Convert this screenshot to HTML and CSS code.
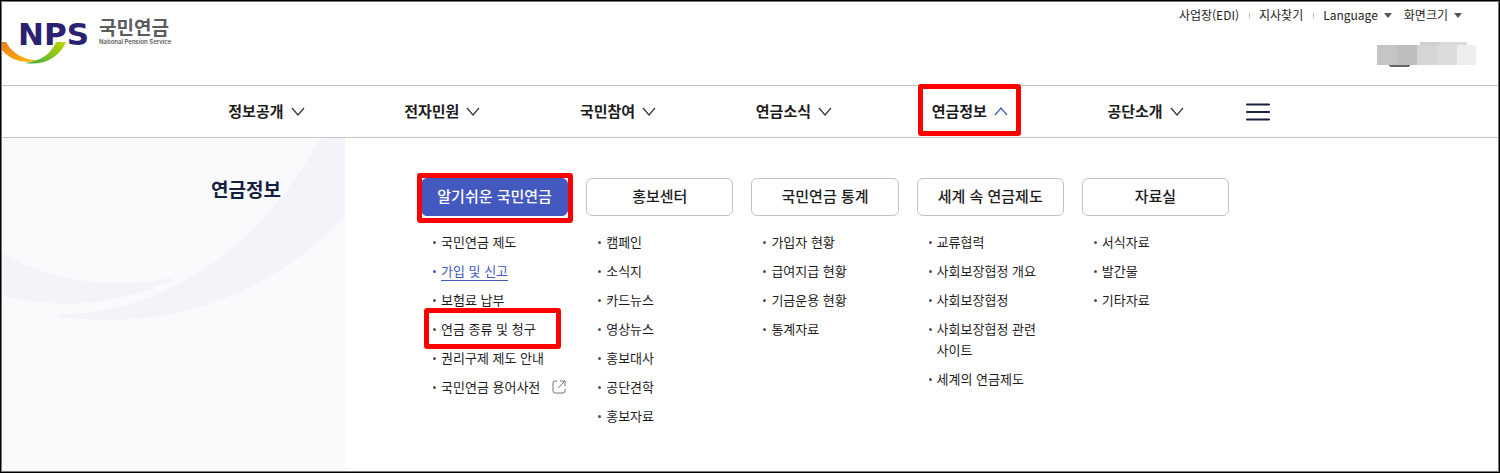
FILE: index.html
```html
<!DOCTYPE html>
<html lang="ko">
<head>
<meta charset="utf-8">
<title>국민연금</title>
<link rel="stylesheet" href="styles.css">
</head>
<body>
<div class="page">
  <header class="header">
    <a class="logo" href="#">
      <svg width="172" height="68" viewBox="2 2 172 68" role="img" aria-label="NPS 국민연금">
        <defs>
          <linearGradient id="orange" x1="0" y1="0" x2="1" y2="1">
            <stop offset="0" stop-color="#ee7d16"/><stop offset="1" stop-color="#fbb800"/>
          </linearGradient>
          <linearGradient id="green" x1="0" y1="1" x2="1" y2="0">
            <stop offset="0" stop-color="#3fae3a"/><stop offset="1" stop-color="#c3d500"/>
          </linearGradient>
        </defs>
        <path d="M2 42H6C12 53 23 60 38 60.500C23 64 10 60 2 50Z" fill="url(#orange)"/>
        <path d="M25 63C41 61 51 54 56 42H66C59 58 43 66 25 63Z" fill="url(#green)"/>
        <text class="logo-mark" x="18" y="45">NPS</text>
        <text class="logo-name" x="99" y="35">국민연금</text>
        <text class="logo-sub" x="99" y="44">National Pension Service</text>
      </svg>
    </a>
    <div class="header-side">
      <ul class="util">
        <li><a href="#">사업장(EDI)</a></li>
        <li><a href="#">지사찾기</a></li>
        <li><button type="button">Language <span class="caret"></span></button></li>
        <li><button type="button">화면크기 <span class="caret"></span></button></li>
      </ul>
      <svg class="mosaic" width="99" height="25" viewBox="0 0 99 25" shape-rendering="crispEdges" aria-hidden="true">
        <path d="M43 0H63V3H43Z" fill="#d0d0d0"/>
        <path d="M63 0H90V3H63Z" fill="#dbdddc"/>
        <path d="M0 3H20V23H0Z" fill="#c5c5c5"/>
        <path d="M20 3H40V23H20Z" fill="#bebebe"/>
        <path d="M40 3H60V23H40Z" fill="#d5d5d5"/>
        <path d="M60 3H80V23H60Z" fill="#dbdddc"/>
        <path d="M80 3H99V23H80Z" fill="#eeeeee"/>
        <path d="M11 23H33L31 25H13Z" fill="#666"/>
      </svg>
    </div>
  </header>

  <nav class="nav">
    <div class="nav-inner">
      <ul class="nav-list">
        <li><a href="#">정보공개<svg class="chev" viewBox="0 0 12 8"><path d="M0 0l6 7 6-7"/></svg></a></li>
        <li><a href="#">전자민원<svg class="chev" viewBox="0 0 12 8"><path d="M0 0l6 7 6-7"/></svg></a></li>
        <li><a href="#">국민참여<svg class="chev" viewBox="0 0 12 8"><path d="M0 0l6 7 6-7"/></svg></a></li>
        <li><a href="#">연금소식<svg class="chev" viewBox="0 0 12 8"><path d="M0 0l6 7 6-7"/></svg></a></li>
        <li><a class="marked marked-nav" href="#">연금정보<svg class="chev chev-open" viewBox="0 0 12 8"><path d="M0 7l6-7 6 7"/></svg></a></li>
        <li><a href="#">공단소개<svg class="chev" viewBox="0 0 12 8"><path d="M0 0l6 7 6-7"/></svg></a></li>
      </ul>
      <button class="menu" type="button" aria-label="전체메뉴">
        <svg width="24" height="18" viewBox="0 0 24 18"><path d="M1 1.500H23M1 9H23M1 16.500H23"/></svg>
      </button>
    </div>
  </nav>

  <main class="mega">
    <div class="mega-side">
      <svg class="swoosh" width="343" height="190" viewBox="2 138 343 190" aria-hidden="true">
        <path d="M2 253C55 283 110 289 170 278C174 278 173 280 170 281C115 306 60 309 2 296Z"/>
        <path d="M59 314C155 315 254 256 316 145Q320 138 328 138H345V216C270 296 168 331 60 317Q56 315 59 314Z"/>
      </svg>
      <h2 class="mega-title">연금정보</h2>
    </div>
    <div class="mega-cols">
      <section>
        <a class="tab tab-on marked marked-tab" href="#">알기쉬운 국민연금</a>
        <ul class="links">
          <li><a href="#">국민연금 제도</a></li>
          <li class="current"><a href="#">가입 및 신고</a></li>
          <li><a href="#">보험료 납부</a></li>
          <li class="marked marked-link"><a href="#">연금 종류 및 청구</a></li>
          <li><a href="#">권리구제 제도 안내</a></li>
          <li><a class="external" href="#">국민연금 용어사전<svg width="14" height="14" viewBox="0 0 14 14"><path d="M5 1H3Q1 1 1 3V11Q1 13 3 13H11Q13 13 13 11V9M8 1H13V6M13 1L6 8"/></svg></a></li>
        </ul>
      </section>
      <section>
        <a class="tab" href="#">홍보센터</a>
        <ul class="links">
          <li><a href="#">캠페인</a></li>
          <li><a href="#">소식지</a></li>
          <li><a href="#">카드뉴스</a></li>
          <li><a href="#">영상뉴스</a></li>
          <li><a href="#">홍보대사</a></li>
          <li><a href="#">공단견학</a></li>
          <li><a href="#">홍보자료</a></li>
        </ul>
      </section>
      <section>
        <a class="tab" href="#">국민연금 통계</a>
        <ul class="links">
          <li><a href="#">가입자 현황</a></li>
          <li><a href="#">급여지급 현황</a></li>
          <li><a href="#">기금운용 현황</a></li>
          <li><a href="#">통계자료</a></li>
        </ul>
      </section>
      <section>
        <a class="tab" href="#">세계 속 연금제도</a>
        <ul class="links">
          <li><a href="#">교류협력</a></li>
          <li><a href="#">사회보장협정 개요</a></li>
          <li><a href="#">사회보장협정</a></li>
          <li><a href="#">사회보장협정 관련 사이트</a></li>
          <li><a href="#">세계의 연금제도</a></li>
        </ul>
      </section>
      <section>
        <a class="tab" href="#">자료실</a>
        <ul class="links">
          <li><a href="#">서식자료</a></li>
          <li><a href="#">발간물</a></li>
          <li><a href="#">기타자료</a></li>
        </ul>
      </section>
    </div>
  </main>
</div>
</body>
</html>
```
FILE: styles.css
```css
* { box-sizing: border-box; }
html { height: 100%; }
body {
  margin: 0;
  min-height: 100%;
  display: flex;
  border: 1px solid #000;
  background: #fff;
  color: #1d1d1d;
  font-family: "Noto Sans CJK KR", "Noto Sans", sans-serif;
  word-break: keep-all;
}
ul { list-style: none; margin: 0; padding: 0; }
a { color: inherit; text-decoration: none; }
button { border: 0; padding: 0; background: none; color: inherit; font: inherit; cursor: pointer; }

.page {
  flex: 1;
  min-width: 0;
  display: flex;
  flex-direction: column;
  border: 1px solid #777;
}

.header { display: flex; justify-content: space-between; min-height: 83px; }
.logo svg { display: block; }
.logo-mark { font: 700 31px "DejaVu Sans", sans-serif; fill: #2b2171; }
.logo-name { font: 700 19px "Noto Sans CJK KR", sans-serif; fill: #5b5b5d; }
.logo-sub { font: 600 6px Inter, sans-serif; fill: #5b5b5d; }
.header-side {
  display: flex;
  flex-direction: column;
  align-items: flex-end;
  gap: 17px;
  padding: 3px 22px 0 0;
}
.util { display: flex; padding-right: 14px; font-size: 12px; line-height: 20px; }
.util li { display: flex; align-items: center; }
.util li + li { margin-left: 10px; }
.util li:nth-child(2)::before,
.util li:nth-child(3)::before {
  content: "";
  width: 1px;
  height: 5px;
  margin-right: 9px;
  background: #bbb;
}
.util li:last-child { margin-left: 12px; }
.util button { display: flex; align-items: center; gap: 6px; }
.caret { border: 4px solid transparent; border-top: 5px solid #555; border-bottom: 0; }

.nav { border-top: 1px solid #c3c3c3; border-bottom: 1px solid #c3c3c3; }
.nav-inner { display: flex; max-width: 1144px; margin: 0 auto; }
.nav-list { flex: 1; display: grid; grid-template-columns: repeat(6, 1fr); }
.nav-list li { display: flex; justify-content: center; }
.nav-list a {
  display: flex;
  align-items: center;
  gap: 8px;
  height: 51px;
  padding-bottom: 2px;
  font-size: 15px;
  font-weight: 700;
}
.chev { width: 12px; height: 8px; margin-top: 2px; fill: none; stroke: #333; stroke-width: 1.2; overflow: visible; }
.chev-open { stroke: #4459c0; }
.menu { width: 89px; padding-left: 13px; text-align: left; }
.menu svg { display: block; fill: none; stroke: #16213f; stroke-width: 2; stroke-linecap: round; }

.marked { position: relative; }
.marked::after {
  content: "";
  position: absolute;
  border: 5px solid #f00;
  border-radius: 3px;
}
.marked-nav::after { inset: -2px -14px 1px -14px; }
.marked-tab::after { inset: -6px -6px -8px -5px; }
.marked-link::after { inset: -10px 7px -10px 3px; }

.mega { flex: 1; display: flex; }
.mega-side {
  position: relative;
  width: 343px;
  padding: 37px 64px 0 0;
  background: #f9fafc;
  text-align: right;
}
.swoosh { position: absolute; top: 0; right: 0; fill: #f3f4fa; }
.mega-title {
  position: relative;
  margin: 0;
  color: #16213f;
  font-size: 19px;
  line-height: 28px;
  font-weight: 700;
}
.mega-cols {
  flex: 1;
  display: grid;
  grid-template-columns: repeat(5, 1fr);
  align-content: start;
  gap: 18px;
  max-width: 884px;
  padding: 40px 0 40px 76px;
}
.tab {
  display: block;
  padding-bottom: 2px;
  border: 1px solid #c3c3c3;
  border-radius: 6px;
  font-size: 15px;
  line-height: 34px;
  font-weight: 500;
  text-align: center;
}
.tab-on { border-color: #4459c0; background: #4459c0; color: #fff; }
.links {
  display: grid;
  gap: 8px;
  margin-top: 15px;
  font-size: 13px;
  line-height: 21px;
}
.links li { position: relative; padding-left: 20px; }
.links li::before {
  content: "";
  position: absolute;
  left: 12px;
  top: 10px;
  width: 3px;
  height: 3px;
  border-radius: 50%;
  background: #555;
}
.links .current { color: #4459c0; }
.links .current::before { background: #4459c0; }
.current a { text-decoration: underline; text-underline-offset: 4px; }
.external { display: flex; align-items: center; gap: 12px; white-space: nowrap; }
.external svg { fill: none; stroke: #777; }
```
